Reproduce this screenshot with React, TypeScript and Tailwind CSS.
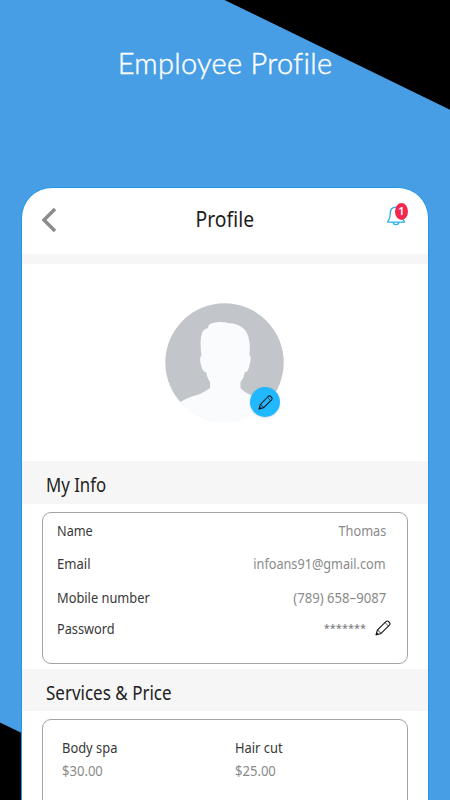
import type { ReactNode } from "react";

function Pencil({ size = 16 }: { size?: number }) {
  return (
    <svg width={size} height={size} viewBox="0 0 16 16" fill="none" stroke="#151515" strokeWidth="1.1" strokeLinejoin="round">
      <path d="M1.2 14.8 2.3 10.2 10.9 1.6Q12.2.4 13.4 1.5L14.5 2.6Q15.6 3.8 14.4 5.1L5.8 13.7Z" />
      <path d="M2.3 10.2 3.8 10.7 4.1 11.9 5.3 12.2 5.8 13.7M10 2.5 13.5 6" strokeWidth=".7" />
      <path d="M1.2 14.8 1.7 13 3 14.3Z" fill="#151515" />
    </svg>
  );
}

function Bell() {
  return (
    <svg width="18" height="20" viewBox="0 0 18 20" fill="none" stroke="#25b1e6" strokeWidth="1.3" strokeLinejoin="round">
      <path d="M.8 16.2H17.2V15.2Q14.6 13 14.6 7.8C14.6 3.6 12.4 1.1 9 1.1S3.2 3.6 3.2 7.8Q3.2 13 .8 15.2Z" />
      <path d="M6.2 16.4C6.4 19.3 11.6 19.3 11.8 16.4" />
    </svg>
  );
}

function Section({ children, className }: { children: ReactNode; className: string }) {
  return (
    <div className={`flex items-center bg-[#f6f6f6] pl-6 text-[20px] text-[#222] ${className}`}>
      {children}
    </div>
  );
}

function Row({ label, value, className, labelScale, valueScale }: { label: string; value: string; className: string; labelScale: string; valueScale: string }) {
  return (
    <div className={`flex h-5 items-center justify-between ${className}`}>
      <span className={`origin-left whitespace-nowrap ${labelScale}`}>{label}</span>
      <span className={`origin-right whitespace-nowrap text-[#8a8a8a] ${valueScale}`}>{value}</span>
    </div>
  );
}

function Service({ name, price }: { name: string; price: string }) {
  return (
    <div className="flex flex-col gap-[3px]">
      <span className="h-5 origin-left scale-x-[.86] leading-5">{name}</span>
      <span className="h-5 origin-left scale-x-[.87] leading-5 text-[#8a8a8a]">{price}</span>
    </div>
  );
}

export default function App() {
  return (
    <div className="relative isolate h-[800px] w-[450px] overflow-hidden bg-[#479ee4] font-['Noto_Sans',sans-serif]">
      <svg className="absolute inset-0 -z-10" width="450" height="800">
        <path d="M224.5 0H450V109.7ZM0 722.5 160 800H0Z" fill="#000" />
      </svg>
      <h1 className="flex h-[187px] justify-center pt-[45px] font-['Lato',sans-serif] text-[29px] leading-[36px] font-light tracking-[.3px] text-white [-webkit-text-stroke:.45px_white]">
        <span className="whitespace-nowrap">Employee Profile</span>
      </h1>
      <main className="mx-[21px] flex h-[660px] flex-col overflow-hidden rounded-t-[31px] border border-[#1b98e8] bg-white text-[15px] text-[#383838]">
        <header className="flex h-[66px] shrink-0 items-center justify-between pr-[20px] pb-[2px] pl-[20px]">
          <svg className="-mt-px" width="14" height="26" viewBox="0 0 14 26" fill="none" stroke="#8c8c8c" strokeWidth="3.4">
            <path d="M13 2 2 13 13 24" />
          </svg>
          <span className="ml-[6px] scale-x-[.92] text-[21px] text-[#1c1c1c]">Profile</span>
          <div className="relative -mt-[8px] flex w-[21px]">
            <Bell />
            <span className="absolute -top-[3px] left-[8px] flex h-[17px] w-[13px] items-center justify-center rounded-[50%] bg-[#f22850] text-[11px] font-semibold text-white">1</span>
          </div>
        </header>
        <div className="h-[10px] shrink-0 bg-[#f6f6f6]" />
        <div className="flex h-[197px] shrink-0 items-center justify-center pr-[1px]">
          <div className="relative h-[119px] w-[119px]">
            <svg width="119" height="119" viewBox="0 0 119 119">
              <circle cx="59.5" cy="59.5" r="59.2" fill="#c2c5c9" />
              <path d="M15.5 99Q21 95 35 91Q41 88 45 85V79Q42 75 41 69Q38 70 36 62Q34 54 36.5 52.5Q35 43 36 34Q37 26 43 25Q43 21 48 20Q56 18 63 20Q73 20 80 27Q86 34 84.5 52.5Q87 53 84.5 62Q83 70 80 69Q79 75 75.5 79V85Q79 89 86 92L106 98A60 60 0 0 1 15.5 99.5Z" fill="#fafbfd" />
            </svg>
            <div className="absolute top-[84px] left-[85px] flex h-[30px] w-[30px] items-center justify-center rounded-full bg-[#22b8ff] shadow-sm">
              <Pencil size={15} />
            </div>
          </div>
        </div>
        <Section className="h-[43px] shrink-0 pt-[5px]">
          <span className="origin-left scale-x-[.84]">My Info</span>
        </Section>
        <div className="mx-[20px] mt-[8px] flex h-[152px] shrink-0 flex-col rounded-[9px] border border-[#a3a3a3] pt-[7px] pr-[21px] pl-[14px]">
          <Row label="Name" value="Thomas" className="" labelScale="scale-x-[.845]" valueScale="scale-x-[.85]" />
          <Row label="Email" value="infoans91@gmail.com" className="mt-[13px]" labelScale="scale-x-[.87]" valueScale="scale-x-[.845]" />
          <Row label="Mobile number" value="(789) 658–9087" className="mt-[14px]" labelScale="scale-x-[.855]" valueScale="scale-x-[.875]" />
          <div className="mt-[11px] -mr-[5px] flex h-5 items-center">
            <span className="origin-left scale-x-[.85]">Password</span>
            <span className="mt-[1px] mr-[9px] ml-auto text-[11px] font-medium text-[#828282]">*******</span>
            <Pencil />
          </div>
        </div>
        <Section className="mt-[5px] h-[42px] shrink-0 pt-[6px]">
          <span className="origin-left scale-x-[.85]">Services &amp; Price</span>
        </Section>
        <div className="mx-[20px] mt-[8px] grid h-[140px] shrink-0 grid-cols-[173px_1fr] rounded-[9px] border border-[#a3a3a3] pt-[17px] pl-[19px]">
          <Service name="Body spa" price="$30.00" />
          <Service name="Hair cut" price="$25.00" />
        </div>
      </main>
    </div>
  );
}
